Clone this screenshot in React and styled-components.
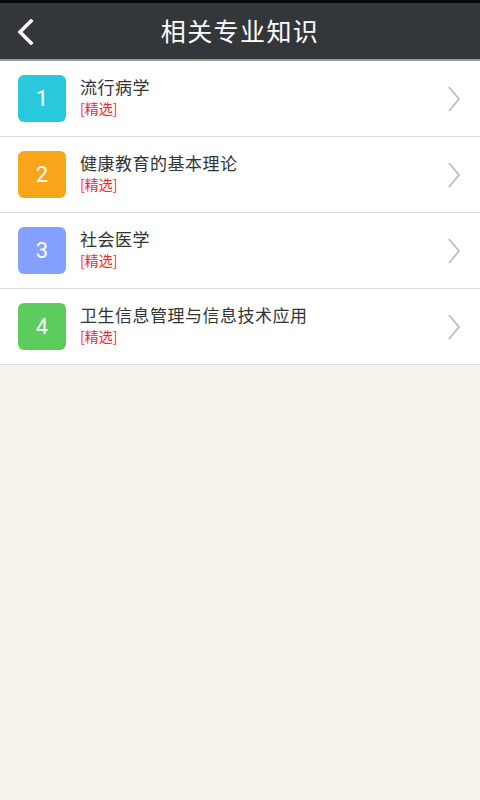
import React from "react";
import styled, { createGlobalStyle } from "styled-components";

const GlobalStyle = createGlobalStyle`
  html, body {
    margin: 0;
    padding: 0;
    background: #f6f3ed;
  }
  body {
    font-family: "Noto Sans CJK SC", "Noto Sans", sans-serif;
  }
`;

const Page = styled.div`
  width: 480px;
  min-height: 800px;
  background: #f6f3ed;
  border-top: 3px solid #050505;
  box-sizing: border-box;
`;

const Header = styled.div`
  height: 56px;
  background: #33373a;
  border-bottom: 2px solid #9a9c9c;
  display: flex;
  align-items: center;
  justify-content: center;
  position: relative;
`;

const BackButton = styled.div`
  position: absolute;
  left: 13px;
  top: 14px;
  width: 24px;
  height: 30px;
  display: flex;
  align-items: center;
  justify-content: center;
`;

const Title = styled.h1`
  margin: 0;
  color: #ffffff;
  font-size: 25px;
  font-weight: 400;
  letter-spacing: 1.4px;
  margin-top: -3px;
`;

const List = styled.div`
  background: #ffffff;
`;

const Row = styled.div`
  height: 75px;
  display: flex;
  align-items: center;
  padding: 0 18px;
  border-bottom: 1px solid #dcdcdc;
`;

const Badge = styled.div`
  width: 48px;
  height: 47px;
  border-radius: 6px;
  background: ${(p) => p.$color};
  color: #ffffff;
  font-family: "Roboto", "Liberation Sans", sans-serif;
  font-size: 22px;
  display: flex;
  align-items: center;
  justify-content: center;
  flex-shrink: 0;
`;

const Texts = styled.div`
  flex: 1;
  margin-left: 14px;
  display: flex;
  flex-direction: column;
  margin-top: -5px;
`;

const Name = styled.div`
  font-size: 17px;
  color: #333333;
  line-height: 20px;
  letter-spacing: 0.5px;
`;

const Tag = styled.div`
  font-size: 14px;
  color: #ff1f1f;
  line-height: 16px;
  margin-top: 3px;
`;

const Chevron = styled.div`
  width: 14px;
  height: 26px;
  margin-right: 1px;
`;

const items = [
  { n: 1, name: "流行病学", color: "#29c8dc" },
  { n: 2, name: "健康教育的基本理论", color: "#f9a51a" },
  { n: 3, name: "社会医学", color: "#85a1ff" },
  { n: 4, name: "卫生信息管理与信息技术应用", color: "#5ccc5c" },
];

export default function App() {
  return (
    <>
      <GlobalStyle />
      <Page>
        <Header>
          <BackButton>
            <svg width="20" height="26" viewBox="0 0 20 26">
              <path d="M16 2 L5 13 L16 24" fill="none" stroke="#ffffff" strokeWidth="3.6" strokeLinecap="square" />
            </svg>
          </BackButton>
          <Title>相关专业知识</Title>
        </Header>
        <List>
          {items.map((it) => (
            <Row key={it.n}>
              <Badge $color={it.color}>{it.n}</Badge>
              <Texts>
                <Name>{it.name}</Name>
                <Tag>[精选]</Tag>
              </Texts>
              <Chevron>
                <svg width="14" height="26" viewBox="0 0 14 26">
                  <path d="M2 1 L12 13 L2 25" fill="none" stroke="#b8b8b8" strokeWidth="1.6" />
                </svg>
              </Chevron>
            </Row>
          ))}
        </List>
      </Page>
    </>
  );
}
